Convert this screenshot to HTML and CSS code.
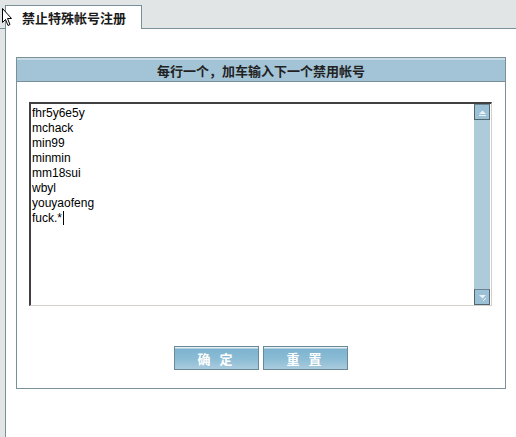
FILE: index.html
```html
<!DOCTYPE html>
<html lang="zh-CN">
<head>
    <meta charset="UTF-8">
    <title>禁止特殊帐号注册</title>
    <link rel="stylesheet" href="styles.css">
</head>
<body>

<div class="tabbar">
    <div class="tab">禁止特殊帐号注册</div>
</div>

<div class="main">
    <div class="panel">
        <div class="panel-title">每行一个，加车输入下一个禁用帐号</div>

        <div class="listbox">
            <div class="entries">fhr5y6e5y
mchack
min99
minmin
mm18sui
wbyl
youyaofeng
fuck.*<span class="caret"></span></div>
            <div class="scroll">
                <div class="scroll-btn up">
                    <svg width="11" height="11" viewBox="0 0 11 11"><path d="M2 7 L5.5 3.5 L9 7 Z" fill="#e8f2f7"/><rect x="2" y="8" width="7" height="1" fill="#e8f2f7"/></svg>
                </div>
                <div class="scroll-track"></div>
                <div class="scroll-btn down">
                    <svg width="11" height="11" viewBox="0 0 11 11"><path d="M2 3 L5.5 6.5 L9 3 Z" fill="#e8f2f7"/><path d="M6 9 L9 6" stroke="#e8f2f7" stroke-width="1"/></svg>
                </div>
            </div>
        </div>

        <div class="actions">
            <button class="btn">确 定</button>
            <button class="btn">重 置</button>
        </div>
    </div>
</div>

<!-- mouse pointer -->
<svg class="pointer" width="13" height="20" viewBox="0 0 13 20">
    <path d="M1.5 1.5 L1.5 15.5 L4.5 12.5 L7 18.5 L9 17.5 L6.5 11.5 L10.5 11.5 Z" fill="#fff" stroke="#000" stroke-width="1"/>
</svg>

</body>
</html>
```

FILE: styles.css
```css
body {
    margin: 0;
    height: 437px;
    overflow: hidden;
    background-color: #e1e5e5;
    font-family: "Liberation Sans", "Noto Sans CJK SC", sans-serif;
    font-size: 12px;
    color: #000;
    position: relative;
}

.tabbar {
    height: 23px;
    padding: 5px 0 0 5px;
    border-bottom: 1px solid #7a9099;
    display: flex;
}

.tab {
    width: 134px;
    height: 23px;
    margin-bottom: -1px;
    background-color: #fff;
    border: 1px solid #7a9099;
    border-bottom: none;
    font-family: "Noto Sans CJK SC", sans-serif;
    font-weight: bold;
    font-size: 13px;
    color: #1a1a1a;
    line-height: 24px;
    padding-left: 1px;
    text-align: center;
}

.main {
    margin-left: 5px;
    height: 408px;
    border-left: 1px solid #7a9099;
    background-color: #fff;
    padding-top: 28px;
    box-sizing: border-box;
}

.panel {
    margin: 0 10px;
    border: 1px solid #7a9099;
    padding-bottom: 18px;
}

.panel-title {
    height: 21px;
    border-top: 2px solid #c8dce6;
    border-bottom: 1px solid #7a9099;
    background-color: #a2c4d6;
    text-align: center;
    font-family: "Noto Sans CJK SC", sans-serif;
    font-weight: bold;
    font-size: 13px;
    line-height: 21px;
    color: #222;
}

.listbox {
    margin: 20px 13px 0 12px;
    height: 204px;
    box-sizing: border-box;
    border-top: 2px solid #404040;
    border-left: 2px solid #404040;
    border-right: 1px solid #d4d0c8;
    border-bottom: 1px solid #d4d0c8;
    display: flex;
    background-color: #fff;
}

.entries {
    flex: 1;
    white-space: pre;
    line-height: 15px;
    padding: 2px 0 0 1px;
    color: #000;
}

.caret {
    display: inline-block;
    width: 1px;
    height: 14px;
    background-color: #000;
    vertical-align: -3px;
    margin-left: 1px;
}

.scroll {
    width: 16px;
    margin-right: 1px;
    display: flex;
    flex-direction: column;
    background-color: #aecbd9;
}

.scroll-track {
    flex: 1;
}

.scroll-btn {
    height: 16px;
    box-sizing: border-box;
    border: 1px solid #4f6570;
    border-top-color: #6d8490;
    background-color: #9cc1d6;
    display: flex;
    align-items: center;
    justify-content: center;
}

.actions {
    margin-top: 40px;
    display: flex;
    justify-content: center;
    gap: 4px;
}

.btn {
    width: 85px;
    height: 24px;
    border: 1px solid #6b8896;
    background: linear-gradient(#e6f0f5 0, #e6f0f5 1px, #7db3cf 2px, #8bbcd5 12px, #aacbdd 100%);
    color: #fff;
    font-family: "Noto Sans CJK SC", sans-serif;
    font-weight: bold;
    font-size: 13px;
    letter-spacing: 3px;
    padding: 0;
    cursor: pointer;
}

.pointer {
    position: absolute;
    left: 1px;
    top: 7px;
}
```
